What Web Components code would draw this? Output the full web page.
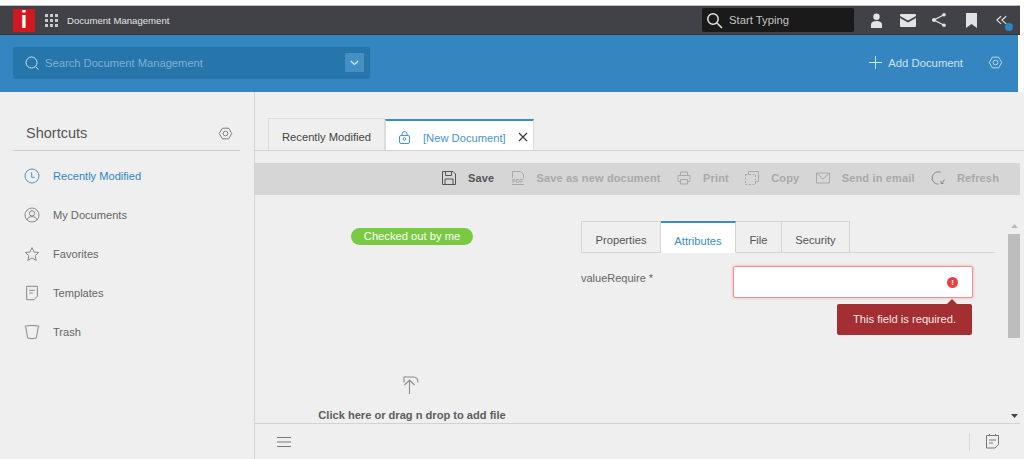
<!DOCTYPE html>
<html>
<head>
<meta charset="utf-8">
<title>Document Management</title>
<style>
  html, body { margin: 0; padding: 0; background: #fff; }
  body { font-family: "Liberation Sans", Arial, sans-serif; width: 1024px; height: 459px; overflow: hidden; }
</style>
</head>
<body>
<app-shell>
  <top-bar slot="top"></top-bar>
  <search-bar slot="top"></search-bar>
  <side-nav slot="side"></side-nav>
  <doc-pane slot="main"></doc-pane>
</app-shell>

<script>
// shared icon strings, all on a 24 box
const ICONS = {
  hex: `<path d="M7 3.5h10L22 12l-5 8.5H7L2 12z"/><circle cx="12" cy="12" r="3.8"/>`,
  clock: `<circle cx="12" cy="12" r="10.5"/><path d="M11.500 6.500V14H16"/>`,
  user: `<circle cx="12" cy="12" r="10.5"/><circle cx="12" cy="9.5" r="4"/><path d="M4.5 19c1.5-3.5 4-4.5 7.5-4.5s6 1 7.5 4.5"/>`,
  star: `<path d="M12 2.5l2.9 6.5 7.1.8-5.3 4.7 1.5 7-6.2-3.6-6.2 3.6 1.5-7L2 9.800l7.100-.8z"/>`,
  note: `<path d="M4 2h16v15l-5 5H4z"/><path d="M8 8h8M8 12h5"/>`,
  trash: `<path d="M1 3.500c5-1.800 17-1.800 22 0"/><path d="M2.500 4l3 17c3.500 1.300 9.500 1.300 13 0l3-17"/>`
};

const icon = (name, size, color, width = 1.2) =>
  `<svg width="${size}" height="${size}" viewBox="0 0 24 24" fill="none" stroke="${color}" stroke-width="${width}">${ICONS[name]}</svg>`;

class AppShell extends HTMLElement {
  constructor() {
    super();
    this.attachShadow({ mode: "open" });
    this.shadowRoot.innerHTML = `
      <style>
        :host { display: flex; flex-direction: column; width: 1024px; height: 459px; background: #efefef; }
        .top { display: block; padding-right: 4px; background: #fff; }
        .body { display: flex; flex: 1; min-height: 0; }
      </style>
      <div class="top"><slot name="top"></slot></div>
      <div class="body">
        <slot name="side"></slot>
        <slot name="main"></slot>
      </div>
    `;
  }
}

class TopBar extends HTMLElement {
  constructor() {
    super();
    this.attachShadow({ mode: "open" });
    this.shadowRoot.innerHTML = `
      <style>
        :host { display: block; margin-top: 5px; border-top: 1px solid #bdbdbd; border-bottom: 1px solid #35363a; background: #414248; color: #e4e4e4; }
        .bar { display: flex; align-items: center; height: 28px; padding-left: 13px; }
        .logo { display: flex; align-items: center; justify-content: center; width: 22px; height: 23px; background: #cf1820; color: #fff; font: bold 23px "Liberation Sans", sans-serif; line-height: 23px; }
        .apps { display: grid; grid-template-columns: repeat(3, 3px); gap: 2px; margin-left: 10px; }
        .apps i { width: 3px; height: 3px; background: #c9c9c9; }
        .title { margin-left: 9px; font-size: 9.600px; }
        .find { display: flex; align-items: center; gap: 6px; box-sizing: border-box; width: 152px; height: 24px; margin-left: auto; padding-left: 4px; background: #1a1a1a; border-radius: 2px; font-size: 11.300px; color: #c4c4c4; }
        .tools { display: flex; align-items: center; margin-left: 6px; position: relative; }
        .tools span { display: flex; justify-content: center; width: 32px; }
        .tools span:last-of-type { width: 24px; margin-right: 8px; }
        .dot { position: absolute; right: 7px; top: 11px; width: 8px; height: 8px; border-radius: 50%; background: #2f82c4; }
      </style>
      <div class="bar">
        <div class="logo">i</div>
        <div class="apps">${"<i></i>".repeat(9)}</div>
        <div class="title">Document Management</div>
        <div class="find">
          <svg width="17" height="17" viewBox="0 0 17 17" fill="none" stroke="#e6e6e6" stroke-width="1.500"><circle cx="7" cy="7" r="5.200"/><path d="M11 11l5 5"/></svg>
          <span>Start Typing</span>
        </div>
        <div class="tools">
          <span><svg width="15" height="15" viewBox="0 0 15 15" fill="#e2e2e2"><circle cx="7.500" cy="3.800" r="3.200"/><path d="M2 15v-3.500C2 9.500 4 8 7.500 8S13 9.500 13 11.500V15z"/></svg></span>
          <span><svg width="16" height="13" viewBox="0 0 16 13" fill="#e2e2e2"><path d="M1 0h14a1 1 0 0 1 1 1v1L8 6.500 0 2V1a1 1 0 0 1 1-1z"/><path d="M0 4l8 4.500L16 4v8a1 1 0 0 1-1 1H1a1 1 0 0 1-1-1z"/></svg></span>
          <span><svg width="16" height="16" viewBox="0 0 16 16" fill="#e2e2e2" stroke="#e2e2e2" style="margin-left:-2px"><path d="M12.500 3L3 8l9.500 5" fill="none" stroke-width="1.300"/><circle cx="13" cy="2.800" r="1.800" stroke="none"/><circle cx="3" cy="8" r="2" stroke="none"/><circle cx="13" cy="13.200" r="1.800" stroke="none"/></svg></span>
          <span><svg width="11" height="15" viewBox="0 0 11 15" fill="#e2e2e2" style="margin-left:-2px"><path d="M0 0h11v15L5.500 11 0 15z"/></svg></span>
          <span><svg width="11" height="11" viewBox="0 0 13 11" fill="none" stroke="#e2e2e2" stroke-width="1.400" style="margin-left:2px"><path d="M6 .5L1 5l5 4.500M12 .5L7 5l5 4.500"/></svg></span>
          <div class="dot"></div>
        </div>
      </div>
    `;
  }
}

class SearchBar extends HTMLElement {
  constructor() {
    super();
    this.attachShadow({ mode: "open" });
    this.shadowRoot.innerHTML = `
      <style>
        :host { display: flex; align-items: center; box-sizing: border-box; height: 57px; margin-right: 2px; padding: 0 0 2px 13px; background: #3586c0; }
        .box { display: flex; align-items: center; box-sizing: border-box; width: 357px; height: 32px; padding: 0 6px 0 12px; background: #2776ab; border-radius: 2px; color: #7fb0d0; font-size: 11.200px; }
        .box span { margin-left: 6px; }
        .drop { display: flex; align-items: center; justify-content: center; width: 19px; height: 19px; margin-left: auto; background: #448fc6; border-radius: 1px; }
        .add { display: flex; align-items: center; gap: 6px; margin-left: auto; color: #cde2f1; font-size: 11.300px; }
        .gear { display: flex; margin: 0 15px 0 25px; }
      </style>
      <div class="box">
        <svg width="14" height="14" viewBox="0 0 14 14" fill="none" stroke="#cfe2ef" stroke-width="1"><circle cx="6.500" cy="6.500" r="5.500"/><path d="M10.500 10.500l3 3"/></svg>
        <span>Search Document Management</span>
        <div class="drop"><svg width="9" height="6" viewBox="0 0 9 6" fill="none" stroke="#dcebf5" stroke-width="1.200"><path d="M.8 1l3.700 3.500L8.200 1"/></svg></div>
      </div>
      <div class="add">
        <svg width="13" height="13" viewBox="0 0 13 13" stroke="#cde2f1" stroke-width="1"><path d="M6.500 0v13M0 6.500h13"/></svg>
        Add Document
      </div>
      <div class="gear">${icon("hex", 15, "#cde2f1", 1.400)}</div>
    `;
  }
}

class NavItem extends HTMLElement {
  constructor() {
    super();
    this.attachShadow({ mode: "open" });
  }
  connectedCallback() {
    const active = this.hasAttribute("active");
    const color = active ? "#2f86bd" : "#777";
    this.shadowRoot.innerHTML = `
      <style>
        :host { display: flex; align-items: center; height: 39px; padding-left: 24px; font-size: 11.100px; color: ${active ? "#2f86bd" : "#666"}; }
        span { margin-left: 13px; }
        svg { display: block; }
      </style>
      ${icon(this.getAttribute("icon"), 16, color, 1.300)}
      <span><slot></slot></span>
    `;
  }
}
customElements.define("nav-item", NavItem);

class SideNav extends HTMLElement {
  constructor() {
    super();
    this.attachShadow({ mode: "open" });
    this.shadowRoot.innerHTML = `
      <style>
        :host { display: block; box-sizing: border-box; width: 255px; height: 100%; border-right: 1px solid #d4d4d4; padding: 0 14px 0 13px; }
        .head { display: flex; align-items: center; justify-content: space-between; box-sizing: border-box; height: 59px; margin-bottom: 5px; padding: 24px 7px 0 13px; border-bottom: 1px solid #cfcfcf; color: #555; font-size: 14.500px; }
        nav { margin-left: -13px; }
      </style>
      <div class="head">Shortcuts ${icon("hex", 15, "#666", 1.300)}</div>
      <nav>
        <nav-item icon="clock" active>Recently Modified</nav-item>
        <nav-item icon="user">My Documents</nav-item>
        <nav-item icon="star">Favorites</nav-item>
        <nav-item icon="note">Templates</nav-item>
        <nav-item icon="trash">Trash</nav-item>
      </nav>
    `;
  }
}

class ToolButton extends HTMLElement {
  constructor() {
    super();
    this.attachShadow({ mode: "open" });
    this.shadowRoot.innerHTML = `
      <style>
        :host { display: inline-flex; align-items: center; font-size: 11px; font-weight: bold; letter-spacing: .15px; color: #a9a9a9; white-space: nowrap; }
        :host([on]) { color: #555; }
        ::slotted(svg) { margin-right: 12px; }
      </style>
      <slot name="icon"></slot><slot></slot>
    `;
  }
}

class DocPane extends HTMLElement {
  constructor() {
    super();
    this.attachShadow({ mode: "open" });
    this.shadowRoot.innerHTML = `
      <style>
        :host { display: flex; flex-direction: column; flex: 1; min-width: 0; height: 367px; color: #555; }
        .tabs { display: flex; height: 32px; margin-top: 26px; padding-left: 13px; border-bottom: 1px solid #d2d2d2; font-size: 11.200px; }
        .tab { display: flex; align-items: center; box-sizing: border-box; padding-top: 4px; border: 1px solid #dcdcdc; border-bottom: 0; }
        .t1 { width: 117px; justify-content: center; color: #444; }
        .t2 { width: 149px; padding-left: 13px; background: #fff; border-top: 2px solid #3a8cc4; color: #4a94c6; position: relative; top: 1px; margin-bottom: 1px; }
        .t2 b { font-weight: normal; margin-left: 12px; }
        .t2 svg:first-child { margin-left: -1px; }
        .t2 svg:last-child { margin-left: 12px; margin-top: -1px; }
        .toolbar { display: flex; align-items: center; justify-content: flex-end; gap: 16.400px; box-sizing: border-box; height: 32px; margin: 12px 4px 0 0; padding: 0 21px 3px 0; background: #d6d6d6; }
        .content { display: flex; flex: 1; min-height: 0; overflow: hidden; margin-right: 4px; }
        .left { display: flex; flex-direction: column; align-items: center; width: 312px; flex: none; }
        .pill { margin: 33px 0 0 2px; padding: 0 12.500px; height: 17px; line-height: 17px; border-radius: 9px; background: #7ac943; color: #fff; font-size: 11.200px; }
        .up { margin: 131px 0 0 -3px; display: block; }
        .drop-text { margin: 14px 0 0 2px; font-size: 11.100px; font-weight: bold; color: #5d5d5d; white-space: nowrap; }
        .form { flex: 1; min-width: 0; padding-top: 26px; }
        .sub { display: flex; height: 32px; margin: 0 13px 0 14px; box-sizing: border-box; border-bottom: 1px solid #d4d4d4; font-size: 11.200px; }
        .sub div { display: flex; align-items: center; justify-content: center; box-sizing: border-box; height: 32px; padding-top: 6px; border: 1px solid #d4d4d4; }
        .sub div + div { border-left: 0; }
        .sub .on { background: #fff; border-bottom: 1px solid #fff; border-top: 2px solid #3a8cc4; color: #3a8cc4; }
        .row { display: flex; margin-top: 13px; }
        .row label { width: 152px; margin-left: 14px; padding-top: 6px; font-size: 11px; color: #666; }
        .field { position: relative; box-sizing: border-box; width: 240px; height: 32px; background: #fff; border: 1px solid #f0908f; border-radius: 2px; box-shadow: 0 0 3px rgba(240, 120, 120, .6); }
        .bang { position: absolute; right: 14px; top: 10px; width: 11px; height: 11px; border-radius: 50%; background: #ea3f3f; color: #fff; font: bold 8px/11px "Liberation Sans", sans-serif; text-align: center; }
        .tip { position: absolute; left: 103px; top: 37px; width: 135px; height: 31px; line-height: 31px; text-align: center; border-radius: 2px; background: #a32f32; color: #f5e6e6; font-size: 11.200px; }
        .tip::before { content: ""; position: absolute; right: 15px; top: -5px; border: 5px solid transparent; border-top: 0; border-bottom-color: #a32f32; }
        .scroll { display: flex; flex-direction: column; align-items: center; width: 12px; flex: none; padding-top: 29px; }
        .scroll .thumb { width: 12px; height: 104px; margin-top: 6px; background: #bdbdbd; }
        .scroll .dn { margin-top: auto; margin-bottom: 5px; }
        .foot { display: flex; align-items: center; height: 36px; box-sizing: border-box; border-top: 1px solid #d2d2d2; padding-left: 22px; margin-right: 4px; }
        .foot .sep { width: 1px; height: 18px; margin-left: auto; background: #d6d6d6; }
        .foot svg:last-child { margin: 0 21px 0 16px; }
      </style>
      <div class="tabs">
        <div class="tab t1">Recently Modified</div>
        <div class="tab t2">
          <svg width="13" height="13" viewBox="0 0 13 13" fill="none" stroke="#4a94c6"><rect x="1.500" y="4.500" width="10" height="8" rx="1.500"/><path d="M4 4.500V3a2.500 2.500 0 0 1 5 0v1.500"/><circle cx="6.500" cy="8" r="1.300"/></svg>
          <b>[New Document]</b>
          <svg width="10" height="10" viewBox="0 0 10 10" stroke="#333" stroke-width="1.100"><path d="M1 1l8 8M9 1l-8 8"/></svg>
        </div>
      </div>
      <div class="toolbar">
        <tool-button on><svg slot="icon" width="14" height="14" viewBox="0 0 14 14" fill="none" stroke="#555"><path d="M.5.500h10.500l2.500 2.500v10.500H.5z"/><path d="M3.500.5v4h6v-4M3 13.500V8h8v5.500"/></svg>Save</tool-button>
        <tool-button><svg slot="icon" width="14" height="14" viewBox="0 0 14 14" fill="none" stroke="#a9a9a9"><path d="M1.500 7V.5h8l3 3V7M1 13.500h12"/><text x="1" y="12" font-size="5.500" font-family="Liberation Sans" font-weight="bold" fill="#a9a9a9" stroke="none">PDF</text></svg>Save as new document</tool-button>
        <tool-button><svg slot="icon" width="14" height="14" viewBox="0 0 14 14" fill="none" stroke="#a9a9a9"><path d="M3.500 4V1h7v3M3.500 10.500H1V4.500h12v6h-2.500"/><path d="M3.500 8.500h7v4.500h-7z"/></svg>Print</tool-button>
        <tool-button><svg slot="icon" width="14" height="14" viewBox="0 0 14 14" fill="none" stroke="#a9a9a9"><path d="M3.500 3.500V.5h10v10h-3"/><path d="M.5 3.500h10v10H.5z" stroke-dasharray="2 1.500"/></svg>Copy</tool-button>
        <tool-button><svg slot="icon" width="14" height="12" viewBox="0 0 14 12" fill="none" stroke="#a9a9a9"><path d="M.5 1h13v10H.5z"/><path d="M.5 1L7 7l6.500-6"/></svg>Send in email</tool-button>
        <tool-button><svg slot="icon" width="14" height="14" viewBox="0 0 14 14" fill="none" stroke="#888"><path d="M9.500 1.200A6.200 6.200 0 1 0 7.500 13.200"/><path d="M13.300 8.500A6.200 6.200 0 0 1 10.500 12.300M10 10v2.500h2.500"/></svg>Refresh</tool-button>
      </div>
      <div class="content">
        <div class="left">
          <div class="pill">Checked out by me</div>
          <svg class="up" width="19" height="19" viewBox="0 0 19 19" fill="none" stroke="#8a8a8a" stroke-width="1.100"><path d="M9.500 18V4M4.500 9l5-5 5 5"/><path d="M4 6.500V1h9c3 0 5 2 5 5.500"/></svg>
          <div class="drop-text">Click here or drag n drop to add file</div>
        </div>
        <div class="form">
          <div class="sub">
            <div style="width:80px">Properties</div>
            <div class="on" style="width:75px">Attributes</div>
            <div style="width:46px">File</div>
            <div style="width:68px">Security</div>
          </div>
          <div class="row">
            <label>valueRequire *</label>
            <div class="field">
              <div class="bang">!</div>
              <div class="tip">This field is required.</div>
            </div>
          </div>
        </div>
        <div class="scroll">
          <svg width="7" height="4" viewBox="0 0 7 4" fill="#bbb"><path d="M0 4l3.500-4L7 4z"/></svg>
          <div class="thumb"></div>
          <svg class="dn" width="7" height="4" viewBox="0 0 7 4" fill="#444"><path d="M0 0h7L3.500 4z"/></svg>
        </div>
      </div>
      <div class="foot">
        <svg width="14" height="10" viewBox="0 0 14 10" stroke="#777"><path d="M0 .5h14M0 5h14M0 9.500h14"/></svg>
        <div class="sep"></div>
        <svg width="13" height="15" viewBox="0 0 13 15" fill="none" stroke="#777"><path d="M.5 1.500h12v9l-3.500 3.500H.5z"/><path d="M3.500 0v2M9.500 0v2M3 6h7M3 9h4"/></svg>
      </div>
    `;
  }
}

customElements.define("app-shell", AppShell);
customElements.define("top-bar", TopBar);
customElements.define("search-bar", SearchBar);
customElements.define("side-nav", SideNav);
customElements.define("tool-button", ToolButton);
customElements.define("doc-pane", DocPane);
</script>
</body>
</html>
